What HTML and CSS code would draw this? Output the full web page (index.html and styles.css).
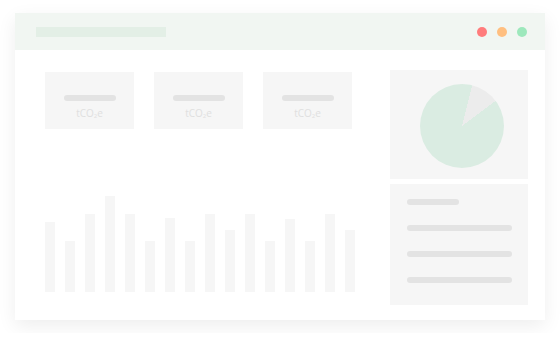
FILE: index.html
```html
<!DOCTYPE html>
<html lang="en">
<head>
    <meta charset="UTF-8">
    <meta name="viewport" content="width=device-width, initial-scale=1.0">
    <title>Dashboard Preview</title>
    <link rel="stylesheet" href="styles.css">
</head>
<body>
    <div class="window">
        <div class="titlebar">
            <div class="title-line"></div>
            <div class="dots">
                <span class="dot red"></span>
                <span class="dot orange"></span>
                <span class="dot green"></span>
            </div>
        </div>
        <div class="content">
            <div class="main">
                <div class="cards">
                    <div class="card"><div class="line"></div><div class="unit">tCO<sub>2</sub>e</div></div>
                    <div class="card"><div class="line"></div><div class="unit">tCO<sub>2</sub>e</div></div>
                    <div class="card"><div class="line"></div><div class="unit">tCO<sub>2</sub>e</div></div>
                </div>
                <div class="chart">
                    <div class="bar" style="height: 70px"></div>
                    <div class="bar" style="height: 51px"></div>
                    <div class="bar" style="height: 78px"></div>
                    <div class="bar" style="height: 96px"></div>
                    <div class="bar" style="height: 78px"></div>
                    <div class="bar" style="height: 51px"></div>
                    <div class="bar" style="height: 74px"></div>
                    <div class="bar" style="height: 51px"></div>
                    <div class="bar" style="height: 78px"></div>
                    <div class="bar" style="height: 62px"></div>
                    <div class="bar" style="height: 78px"></div>
                    <div class="bar" style="height: 51px"></div>
                    <div class="bar" style="height: 73px"></div>
                    <div class="bar" style="height: 51px"></div>
                    <div class="bar" style="height: 78px"></div>
                    <div class="bar" style="height: 62px"></div>
                </div>
            </div>
            <div class="side">
                <div class="panel pie-panel">
                    <div class="pie"></div>
                </div>
                <div class="panel list-panel">
                    <div class="line short"></div>
                    <div class="line"></div>
                    <div class="line"></div>
                    <div class="line"></div>
                </div>
            </div>
        </div>
    </div>
</body>
</html>
```

FILE: styles.css
```css
body {
    margin: 0;
    background: #fff;
    font-family: "Open Sans", Arial, sans-serif;
}
.window {
    width: 530px;
    height: 307px;
    margin: 13px 15px;
    background: #fff;
    box-shadow: 0 6px 18px rgba(0, 0, 0, 0.07);
}
.titlebar {
    height: 37px;
    background: #f1f6f2;
    display: flex;
    align-items: center;
    justify-content: space-between;
    padding: 0 18px 0 21px;
}
.title-line {
    width: 130px;
    height: 10px;
    background: #e3efe6;
}
.dots {
    display: flex;
    gap: 10px;
}
.dot {
    width: 10px;
    height: 10px;
    border-radius: 50%;
}
.red { background: #ff7c7c; }
.orange { background: #ffbf80; }
.green { background: #9de8bc; }

.content {
    display: flex;
    gap: 35px;
    padding: 20px 17px 15px 30px;
}
.main {
    width: 310px;
    padding-top: 2px;
}
.cards {
    display: flex;
    gap: 20px;
}
.card {
    width: 89px;
    height: 57px;
    background: #f6f6f6;
    display: flex;
    flex-direction: column;
    align-items: center;
    padding-top: 23px;
    box-sizing: border-box;
}
.card .line {
    width: 52px;
    height: 6px;
    border-radius: 3px;
    background: #e3e3e3;
}
.unit {
    font-size: 10px;
    color: #e0e0e0;
    margin-top: 6px;
    line-height: 12px;
}
.unit sub {
    font-size: 6px;
    vertical-align: -1px;
}
.chart {
    display: flex;
    align-items: flex-end;
    gap: 10px;
    height: 96px;
    margin-top: 67px;
}
.bar {
    width: 10px;
    background: #f6f6f6;
}
.side {
    width: 138px;
    display: flex;
    flex-direction: column;
    gap: 5px;
}
.panel {
    background: #f6f6f6;
}
.pie-panel {
    height: 109px;
    padding: 14px 0 0 30px;
    box-sizing: border-box;
}
.pie {
    width: 84px;
    height: 84px;
    border-radius: 50%;
    background: conic-gradient(#daece2 0 14deg, #ececec 14deg 53deg, #daece2 53deg);
}
.list-panel {
    height: 121px;
    padding: 15px 16px 0 17px;
    box-sizing: border-box;
    display: flex;
    flex-direction: column;
    gap: 20px;
}
.list-panel .line {
    width: 105px;
    height: 6px;
    border-radius: 3px;
    background: #e3e3e3;
}
.list-panel .line.short {
    width: 52px;
}
```
